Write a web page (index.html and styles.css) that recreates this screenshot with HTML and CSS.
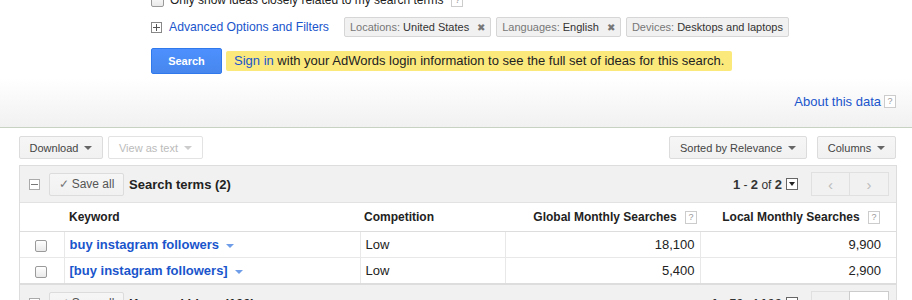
FILE: index.html
```html
<!DOCTYPE html>
<html>
<head>
<meta charset="utf-8">
<link rel="stylesheet" href="styles.css">
</head>
<body>
<div class="page">
  <div class="header">
    <div class="row row-only">
      <span class="cb"></span>
      <span class="only-text">Only show ideas closely related to my search terms</span>
      <span class="help">?</span>
    </div>
    <div class="row row-adv">
      <span class="plusbox"><span class="h"></span><span class="v"></span></span>
      <a class="link adv-link">Advanced Options and Filters</a>
      <span class="chip"><span class="lbl">Locations:</span> United States <span class="x">&#x2716;</span></span>
      <span class="chip"><span class="lbl">Languages:</span> English <span class="x">&#x2716;</span></span>
      <span class="chip"><span class="lbl">Devices:</span> Desktops and laptops</span>
    </div>
    <div class="row row-search">
      <button class="btn-search">Search</button>
      <div class="notice"><a class="link">Sign in</a> with your AdWords login information to see the full set of ideas for this search.</div>
    </div>
    <div class="row row-about">
      <a class="link">About this data</a><span class="help">?</span>
    </div>
  </div>

  <div class="toolbar">
    <div class="tb-group">
      <button class="btn btn-download">Download <span class="tri"></span></button>
      <button class="btn btn-disabled">View as text <span class="tri"></span></button>
    </div>
    <div class="tb-group tb-right">
      <button class="btn btn-sorted">Sorted by Relevance <span class="tri"></span></button>
      <button class="btn btn-columns">Columns <span class="tri"></span></button>
    </div>
  </div>

  <div class="panel">
    <div class="group-head">
      <span class="minusbox"><span class="h"></span></span>
      <button class="btn btn-save"><span class="check">&#x2713;</span> Save all</button>
      <span class="group-title">Search terms (2)</span>
      <span class="spacer"></span>
      <span class="range"><b>1</b> - <b>2</b> of <b>2</b></span>
      <span class="ddbox"><span class="tri tri-dark"></span></span>
      <span class="pager">
        <span class="pg">&#x2039;</span><span class="pg">&#x203A;</span>
      </span>
    </div>
    <table class="grid">
      <colgroup>
        <col class="c-cb"><col class="c-kw"><col class="c-comp"><col class="c-glob"><col class="c-loc">
      </colgroup>
      <thead>
        <tr>
          <th></th>
          <th class="l">Keyword</th>
          <th class="l">Competition</th>
          <th class="r glob">Global Monthly Searches <span class="help">?</span></th>
          <th class="r loc">Local Monthly Searches <span class="help">?</span></th>
        </tr>
      </thead>
      <tbody>
        <tr class="r1">
          <td class="cbcell"><span class="cb"></span></td>
          <td><a class="kw">buy instagram followers</a><span class="tri tri-blue"></span></td>
          <td>Low</td>
          <td class="num glob">18,100</td>
          <td class="num loc">9,900</td>
        </tr>
        <tr class="r2">
          <td class="cbcell"><span class="cb"></span></td>
          <td><a class="kw">[buy instagram followers]</a><span class="tri tri-blue"></span></td>
          <td>Low</td>
          <td class="num glob">5,400</td>
          <td class="num loc">2,900</td>
        </tr>
      </tbody>
    </table>
    <div class="group-head group-head2">
      <span class="minusbox"><span class="h"></span></span>
      <button class="btn btn-save"><span class="check">&#x2713;</span> Save all</button>
      <span class="group-title">Keyword ideas (100)</span>
      <span class="spacer"></span>
      <span class="range"><b>1</b> - <b>50</b> of <b>100</b></span>
      <span class="ddbox"><span class="tri tri-dark"></span></span>
      <span class="pager">
        <span class="pg">&#x2039;</span><span class="pg pg-on">&#x203A;</span>
      </span>
    </div>
  </div>
</div>
</body>
</html>
```

FILE: styles.css
```css
html, body {
  margin: 0;
  padding: 0;
  height: 300px;
  overflow: hidden;
  background: #fff;
}
body {
  font-family: "Liberation Sans", Arial, sans-serif;
  font-size: 13px;
  color: #222;
}
button {
  font-family: inherit;
}
.link {
  color: #1a55cc;
  text-decoration: none;
  cursor: pointer;
}

/* header */
.header {
  height: 127px;
  border-bottom: 1px solid #c8d2c2;
  background: linear-gradient(to bottom, #fff 0, #fff 78px, #f1f1f1 127px);
  padding: 0 16px 0 151px;
  overflow: hidden;
}
.row {
  display: flex;
  align-items: center;
}
.row-only {
  margin-top: -8px;
  height: 16px;
  color: #222;
  font-size: 12px;
}
.row-only .cb {
  width: 11px;
  height: 11px;
  margin-right: 6px;
}
.row-only .help {
  margin-left: 8px;
}
.row-adv {
  margin-top: 9px;
  height: 20px;
}
.plusbox, .minusbox {
  position: relative;
  display: inline-block;
  width: 9px;
  height: 9px;
  border: 1px solid #888;
  background: #fff;
  flex: none;
}
.plusbox .h, .minusbox .h {
  position: absolute;
  left: 1px;
  right: 1px;
  top: 4px;
  height: 1px;
  background: #555;
}
.plusbox .v {
  position: absolute;
  top: 1px;
  bottom: 1px;
  left: 4px;
  width: 1px;
  background: #555;
}
.adv-link {
  margin-left: 7px;
  margin-right: 15px;
  font-size: 12.2px;
}
.chip {
  display: inline-flex;
  align-items: center;
  height: 18px;
  padding: 0 5px 0 5px;
  margin-right: 5px;
  border: 1px solid #d6d6d6;
  border-radius: 2px;
  background: #f1f1f1;
  font-size: 11px;
  color: #333;
  white-space: pre;
}
.chip .lbl {
  color: #777;
}
.chip .x {
  color: #777;
  font-size: 10px;
  margin-left: 5px;
}

.row-search {
  margin-top: 11px;
  height: 26px;
}
.btn-search {
  width: 71px;
  height: 26px;
  border: 1px solid #3079ed;
  border-radius: 2px;
  background: linear-gradient(#4d90fe, #4787ed);
  color: #fff;
  font-weight: bold;
  font-size: 11px;
  padding: 0;
}
.notice {
  margin-left: 4px;
  height: 20px;
  line-height: 20px;
  padding: 0 8px;
  background: #fbe97c;
  border-radius: 2px;
  font-size: 13px;
  color: #222;
}

.row-about {
  margin-top: 19px;
  height: 16px;
  justify-content: flex-end;
}
.help {
  display: inline-block;
  width: 10px;
  height: 11px;
  line-height: 11px;
  border: 1px solid #ccc;
  background: #fff;
  color: #999;
  font-size: 9px;
  text-align: center;
  font-weight: normal;
  vertical-align: middle;
}
.row-about .help {
  margin-left: 3px;
}

/* toolbar */
.toolbar {
  margin-top: 8px;
  padding: 0 16px 0 19px;
  display: flex;
  justify-content: space-between;
}
.tb-group {
  display: flex;
}
.btn {
  box-sizing: border-box;
  white-space: nowrap;
  height: 23px;
  border: 1px solid #dcdcdc;
  border-radius: 2px;
  background: linear-gradient(#f6f6f6, #f1f1f1);
  color: #444;
  font-size: 11px;
  padding: 0;
  display: inline-flex;
  align-items: center;
  justify-content: center;
}
.btn .tri {
  margin-left: 6px;
}
.btn-download {
  width: 84px;
}
.btn-disabled {
  margin-left: 5px;
  width: 95px;
  background: #fff;
  color: #bbb;
  border-color: #e3e3e3;
}
.btn-disabled .tri {
  border-top-color: #ccc;
}
.btn-sorted {
  width: 138px;
}
.btn-columns {
  margin-left: 10px;
  width: 79px;
}
.tri {
  display: inline-block;
  width: 0;
  height: 0;
  border-left: 4px solid transparent;
  border-right: 4px solid transparent;
  border-top: 4px solid #666;
}

/* panel */
.panel {
  margin: 6px 15px 0 19px;
  border-left: 1px solid #ddd;
  border-right: 1px solid #ddd;
}
.group-head {
  height: 36px;
  border-top: 1px solid #ddd;
  border-bottom: 1px solid #e2e2e2;
  background: #f1f1f1;
  display: flex;
  align-items: center;
  padding: 0 7px 0 9px;
}
.minusbox {
  border-color: #aaa;
}
.minusbox .h {
  background: #777;
}
.btn-save {
  margin-left: 9px;
  width: 75px;
  height: 23px;
  font-size: 12px;
  color: #555;
}
.check {
  color: #777;
  font-size: 12px;
  margin-right: 3px;
}
.group-title {
  margin-left: 5px;
  font-weight: bold;
  font-size: 13px;
  color: #222;
}
.spacer {
  flex: 1;
}
.range {
  font-size: 12px;
  color: #333;
}
.range b {
  font-size: 13px;
}
.ddbox {
  margin-left: 4px;
  width: 10px;
  height: 10px;
  border: 1px solid #666;
  background: #fff;
  display: inline-flex;
  align-items: center;
  justify-content: center;
}
.tri-dark {
  border-left-width: 3px;
  border-right-width: 3px;
  border-top: 4px solid #222;
}
.pager {
  margin-left: 13px;
  display: inline-flex;
}
.pg {
  width: 37px;
  height: 22px;
  border: 1px solid #e0e0e0;
  background: #f1f1f1;
  color: #bbb;
  font-size: 15px;
  display: inline-flex;
  align-items: center;
  justify-content: center;
}
.pg + .pg {
  margin-left: -1px;
  width: 38px;
}
.pg-on {
  background: #fff;
  border-color: #ccc;
  color: #333;
}

.grid {
  width: 100%;
  border-collapse: collapse;
  table-layout: fixed;
  background: #fff;
}
.c-cb { width: 44px; }
.c-kw { width: 296px; }
.c-comp { width: 145px; }
.c-glob { width: 195px; }
.c-loc { width: auto; }
.grid th {
  height: 28px;
  font-size: 12px;
  font-weight: bold;
  color: #222;
  border-bottom: 1px solid #ddd;
  padding: 0 4px;
  white-space: nowrap;
}
.grid th.l { text-align: left; }
.grid th.r { text-align: right; }
.grid th.glob { padding-right: 3px; }
.grid th.loc { padding-right: 16px; }
.grid th.r .help { margin-left: 5px; }
.grid th:nth-child(2) { padding-left: 5px; }
.grid td {
  font-size: 13px;
  border-left: 1px solid #e8e8e8;
  padding: 0 5px;
  color: #222;
}
.grid td:first-child { border-left: none; }
.grid tr.r1 td {
  height: 25px;
  border-bottom: 1px solid #e8e8e8;
}
.grid tr.r2 td {
  height: 25px;
}
.grid td.num {
  text-align: right;
}
.grid td.num.glob { padding-right: 5px; }
.grid td.num.loc { padding-right: 15px; }
.grid td.cbcell {
  text-align: left;
  padding-left: 15px;
}
.cb {
  display: inline-block;
  width: 10px;
  height: 10px;
  border: 1px solid #9a9a9a;
  border-radius: 2px;
  background: linear-gradient(#fff, #e9e9e9);
  vertical-align: middle;
}
.kw {
  color: #1a55cc;
  font-weight: bold;
  font-size: 13px;
}
.tri-blue {
  border-top-color: #6f9de8;
  margin-left: 7px;
  vertical-align: middle;
}
.group-head2 {
  border-top: 2px solid #ddd;
}
```
